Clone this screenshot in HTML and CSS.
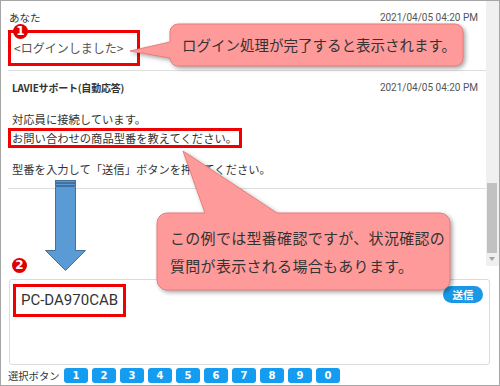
FILE: index.html
```html
<!DOCTYPE html>
<html lang="ja">
<head>
<meta charset="utf-8">
<link rel="stylesheet" href="styles.css">
</head>
<body>
<div class="app">
  <div class="chat">
    <div class="messages">
      <div class="msg msg-user">
        <div class="msg-head"><span class="who">あなた</span><span class="time">2021/04/05 04:20 PM</span></div>
        <div class="login-box">&lt;ログインしました&gt;</div>
      </div>
      <div class="msg msg-bot">
        <div class="msg-head"><span class="who bot">LAVIEサポート(自動応答)</span><span class="time">2021/04/05 04:20 PM</span></div>
        <div class="msg-body">
          <div class="line">対応員に接続しています。</div>
          <div class="line hl">お問い合わせの商品型番を教えてください。</div>
          <div class="line l3">型番を入力して「送信」ボタンを押してください。</div>
        </div>
      </div>
    </div>
    <div class="scrollbar"><div class="thumb"></div><div class="sb-arrow"></div></div>
  </div>
  <div class="composer">
    <div class="model-box">PC-DA970CAB</div>
    <div class="send">送信</div>
  </div>
  <div class="select-row">
    <span class="select-label">選択ボタン</span>
    <span class="key">1</span><span class="key">2</span><span class="key">3</span><span class="key">4</span><span class="key">5</span><span class="key">6</span><span class="key">7</span><span class="key">8</span><span class="key">9</span><span class="key">0</span>
  </div>

  <div class="overlay">
    <svg class="shapes" width="500" height="386" viewBox="0 0 500 386">
      <g class="callout">
        <path d="M178,24 H455 A8,8 0 0 1 463,32 V58 A8,8 0 0 1 455,66 H178 A8,8 0 0 1 170,58 L130,51 L170,42 V32 A8,8 0 0 1 178,24 Z"/>
        <path d="M167,213 H205 L183,151 L277,213 H440 A10,10 0 0 1 450,223 V280 A10,10 0 0 1 440,290 H167 A10,10 0 0 1 157,280 V223 A10,10 0 0 1 167,213 Z"/>
      </g>
      <g class="arrow">
        <rect x="55.5" y="180.5" width="20" height="2"/>
        <rect x="55.5" y="183.5" width="20" height="2"/>
        <path d="M55.5,186.5 H75.5 V250.5 H85.5 L65.5,270.5 L45.5,250.5 H55.5 Z"/>
      </g>
    </svg>
    <div class="note note1">ログイン処理が完了すると表示されます。</div>
    <div class="note note2">この例では型番確認ですが、状況確認の<br>質問が表示される場合もあります。</div>
    <div class="badge badge1">1</div>
    <div class="badge badge2">2</div>
  </div>
</div>
</body>
</html>
```
FILE: styles.css
```css
* { box-sizing: border-box; }
html, body { margin: 0; padding: 0; background: #fff; }
body { font-family: "Noto Sans CJK JP", "Noto Sans", sans-serif; color: #333; }

.app {
  position: relative;
  width: 500px;
  height: 386px;
  border: 1px solid #a6a6a6;
  display: flex;
  flex-direction: column;
  overflow: hidden;
}

.chat { height: 265px; display: flex; flex-shrink: 0; }
.messages { flex: 1; padding-left: 7px; }

.msg { border-bottom: 1px solid #dedede; }
.msg-user { height: 70px; }
.msg-bot { height: 118px; }

.msg-head {
  display: flex;
  justify-content: space-between;
  align-items: center;
  padding: 10px 8px 0 1px;
  height: 24px;
  line-height: 14px;
}
.who { font-size: 10.5px; color: #333; }
.who.bot { font-weight: bold; font-size: 10px; padding-left: 3px; letter-spacing: -0.2px; }
.time { font-family: Roboto, "Liberation Sans", sans-serif; font-size: 10px; color: #555; }

.login-box {
  margin-top: 5px;
  width: 132px;
  height: 36px;
  border: 3px solid #f00000;
  padding-left: 3px;
  line-height: 29px;
  font-size: 12px;
  color: #555;
}

.msg-body { padding-left: 4px; margin-top: 16px; font-size: 11.3px; line-height: 17px; color: #333; }
.line.hl {
  margin-left: -4px;
  width: 234px;
  height: 20px;
  border: 3px solid #f00000;
  padding-left: 1px;
  line-height: 14px;
}
.line.l3 { margin-top: 13px; }

.scrollbar { width: 13px; background: #f0f0f0; position: relative; }
.thumb { position: absolute; left: 1px; width: 10px; top: 182px; height: 70px; background: #c1c1c1; }
.sb-arrow {
  position: absolute; left: 3px; top: 256px;
  width: 0; height: 0;
  border-left: 3.5px solid transparent;
  border-right: 3.5px solid transparent;
  border-top: 4px solid #a3a3a3;
}

.composer {
  flex-shrink: 0;
  margin: 13px 0 0 8px;
  width: 481px;
  height: 86px;
  border: 1px solid #dcdcdc;
  border-radius: 3px;
  display: flex;
  justify-content: space-between;
  align-items: flex-start;
  padding: 4px 6px 0 3px;
}
.model-box {
  width: 113px;
  height: 33px;
  border: 3px solid #f00000;
  padding-left: 5px;
  font-family: Roboto, "Liberation Sans", sans-serif;
  font-size: 15px;
  line-height: 27px;
  color: #333;
}
.send {
  margin-top: 2px;
  width: 40px;
  height: 17px;
  border-radius: 9px;
  background: #1a98e6;
  color: #fff;
  font-size: 10.5px;
  line-height: 17px;
  text-align: center;
  font-weight: bold;
}

.select-row {
  flex-shrink: 0;
  margin: 2px 0 0 7px;
  height: 17px;
  display: flex;
  align-items: center;
  gap: 4px;
}
.select-label {
  flex: 0 0 52px;
  white-space: nowrap;
  font-size: 10.3px;
  color: #333;
  line-height: 15px;
}
.key {
  flex: 0 0 24px;
  height: 15px;
  border-radius: 3px;
  background: #149cf0;
  color: #fff;
  font-family: "DejaVu Sans", sans-serif;
  font-weight: bold;
  font-size: 10px;
  line-height: 15px;
  text-align: center;
}

.overlay { position: absolute; left: -1px; top: -1px; width: 500px; height: 386px; pointer-events: none; }
.shapes { position: absolute; left: 0; top: 0; }
.callout path {
  fill: #ff9a9a;
  stroke: #ea7d7d;
  stroke-width: 1;
  filter: drop-shadow(2px 2px 2px rgba(0,0,0,0.35));
}
.arrow rect, .arrow path { fill: #5b9bd5; stroke: #41719c; stroke-width: 1; }

.note { position: absolute; color: #333; white-space: nowrap; }
.note1 { left: 182px; top: 35px; font-size: 14.5px; line-height: 20px; }
.note2 { left: 170px; top: 224px; font-size: 15px; line-height: 27.5px; letter-spacing: 0.3px; }

.badge {
  position: absolute;
  width: 15px;
  height: 15px;
  border-radius: 50%;
  background: #e00000;
  color: #fff;
  font-family: "DejaVu Sans", sans-serif;
  font-weight: bold;
  font-size: 12px;
  line-height: 15px;
  text-align: center;
}
.badge1 { left: 13px; top: 24px; }
.badge2 { left: 12px; top: 258px; }
```
